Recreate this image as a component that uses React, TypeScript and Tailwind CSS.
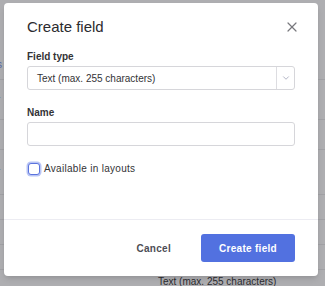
import { X, ChevronDown } from 'lucide-react';

const rows = [
  { h: 'h-[50px]', letter: '', line: false },
  { h: 'h-[30px]', letter: 's', line: true },
  { h: 'h-[40px]', letter: 'r', line: true },
  { h: 'h-[30px]', letter: '', line: true },
  { h: 'h-[45px]', letter: 'r', line: true },
  { h: 'h-[25px]', letter: '', line: true },
  { h: 'h-[25px]', letter: '', line: true },
  { h: 'h-[25px]', letter: '', line: true },
];

function BackgroundPage() {
  return (
    <div className="flex flex-col">
      {rows.map((row, i) => (
        <div
          key={i}
          className={`${row.h} flex items-center px-[0px] ${row.line ? 'border-b border-[#a1a1a5]' : ''}`}
        >
          <span className="text-[10px] leading-none text-[#566aa8] -ml-[3px]">{row.letter}</span>
        </div>
      ))}
    </div>
  );
}

export default function App() {
  return (
    <div
      className="relative w-[325px] h-[286px] overflow-hidden bg-[#aeaeb1]"
      style={{ fontFamily: '"Liberation Sans", Arial, sans-serif' }}
    >
      <BackgroundPage />
      <div className="absolute left-[158px] top-[275px] text-[10px] leading-[14px] text-[#2c2c30]">
        Text (max. 255 characters)
      </div>

      {/* modal */}
      <div className="absolute left-[4px] top-[3px] w-[314px] h-[273px] bg-white rounded-[4px] shadow-md flex flex-col">
        <div className="flex-1 px-[23px] pt-[14px]">
          <div className="h-[20px] flex items-center justify-between">
            <h2 className="text-[15px] leading-[20px] text-[#2b2b2e]">Create field</h2>
            <button className="text-[#78787d] -mr-[5px] mt-[-1px]">
              <X className="w-[16px] h-[16px]" strokeWidth={1.8} />
            </button>
          </div>

          <label className="block mt-[14px] text-[10px] leading-[12px] font-bold text-[#333336]">
            Field type
          </label>
          <div className="mt-[3px] h-[24px] flex items-stretch border border-[#d6d6da] rounded-[3px]">
            <div className="flex-1 flex items-center pl-[9px] text-[10px] text-[#333336]">
              Text (max. 255 characters)
            </div>
            <div className="w-[18px] border-l border-[#dddde1] flex items-center justify-center text-[#a3a7ba]">
              <ChevronDown className="w-[10px] h-[10px]" strokeWidth={2} />
            </div>
          </div>

          <label className="block mt-[17px] text-[10px] leading-[12px] font-bold text-[#333336]">
            Name
          </label>
          <div className="mt-[3px] h-[24px] border border-[#d6d6da] rounded-[3px]" />

          <div className="mt-[16px] h-[13px] flex items-center">
            <span className="ml-[1px] w-[12px] h-[12px] rounded-[3px] border border-[#5b73dd] bg-white ring-[1.5px] ring-[#b9c5f5]" />
            <span className="ml-[4px] text-[10px] text-[#333336] tracking-[0.3px]">Available in layouts</span>
          </div>
        </div>

        <div className="h-[57px] border-t border-[#ececf2] flex items-center justify-end pr-[23px]">
          <button className="text-[10px] font-bold text-[#4d4d55] tracking-[0.3px]">Cancel</button>
          <button className="ml-[30px] w-[94px] h-[28px] rounded-[3px] bg-[#5271e0] text-white text-[10px] font-bold tracking-[0.3px]">
            Create field
          </button>
        </div>
      </div>
    </div>
  );
}
